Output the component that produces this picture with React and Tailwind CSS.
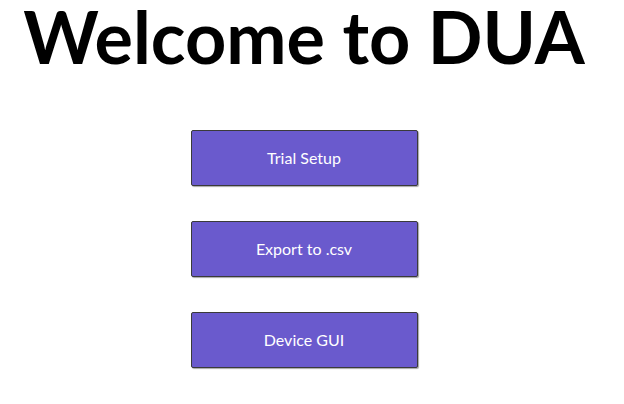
import React from "react";

function Btn({ children }) {
  return (
    <button className="w-[227px] h-[56px] bg-[#6a5acd] border border-[#3a3a3a] rounded-[2px] shadow-[1px_1px_1px_rgba(0,0,0,0.35)] text-white text-[16px] flex items-center justify-center" style={{ fontFamily: '"Lato", "Open Sans", sans-serif' }}>
      {children}
    </button>
  );
}

export default function App() {
  return (
    <div className="w-[608px] h-[404px] bg-white flex flex-col items-center" style={{ fontFamily: '"Lato", "Open Sans", sans-serif' }}>
      <h1 className="text-[72px] font-bold leading-[72px] text-black">Welcome to DUA</h1>
      <div className="flex flex-col gap-[35px] mt-[58px]">
        <Btn>Trial Setup</Btn>
        <Btn>Export to .csv</Btn>
        <Btn>Device GUI</Btn>
      </div>
    </div>
  );
}
